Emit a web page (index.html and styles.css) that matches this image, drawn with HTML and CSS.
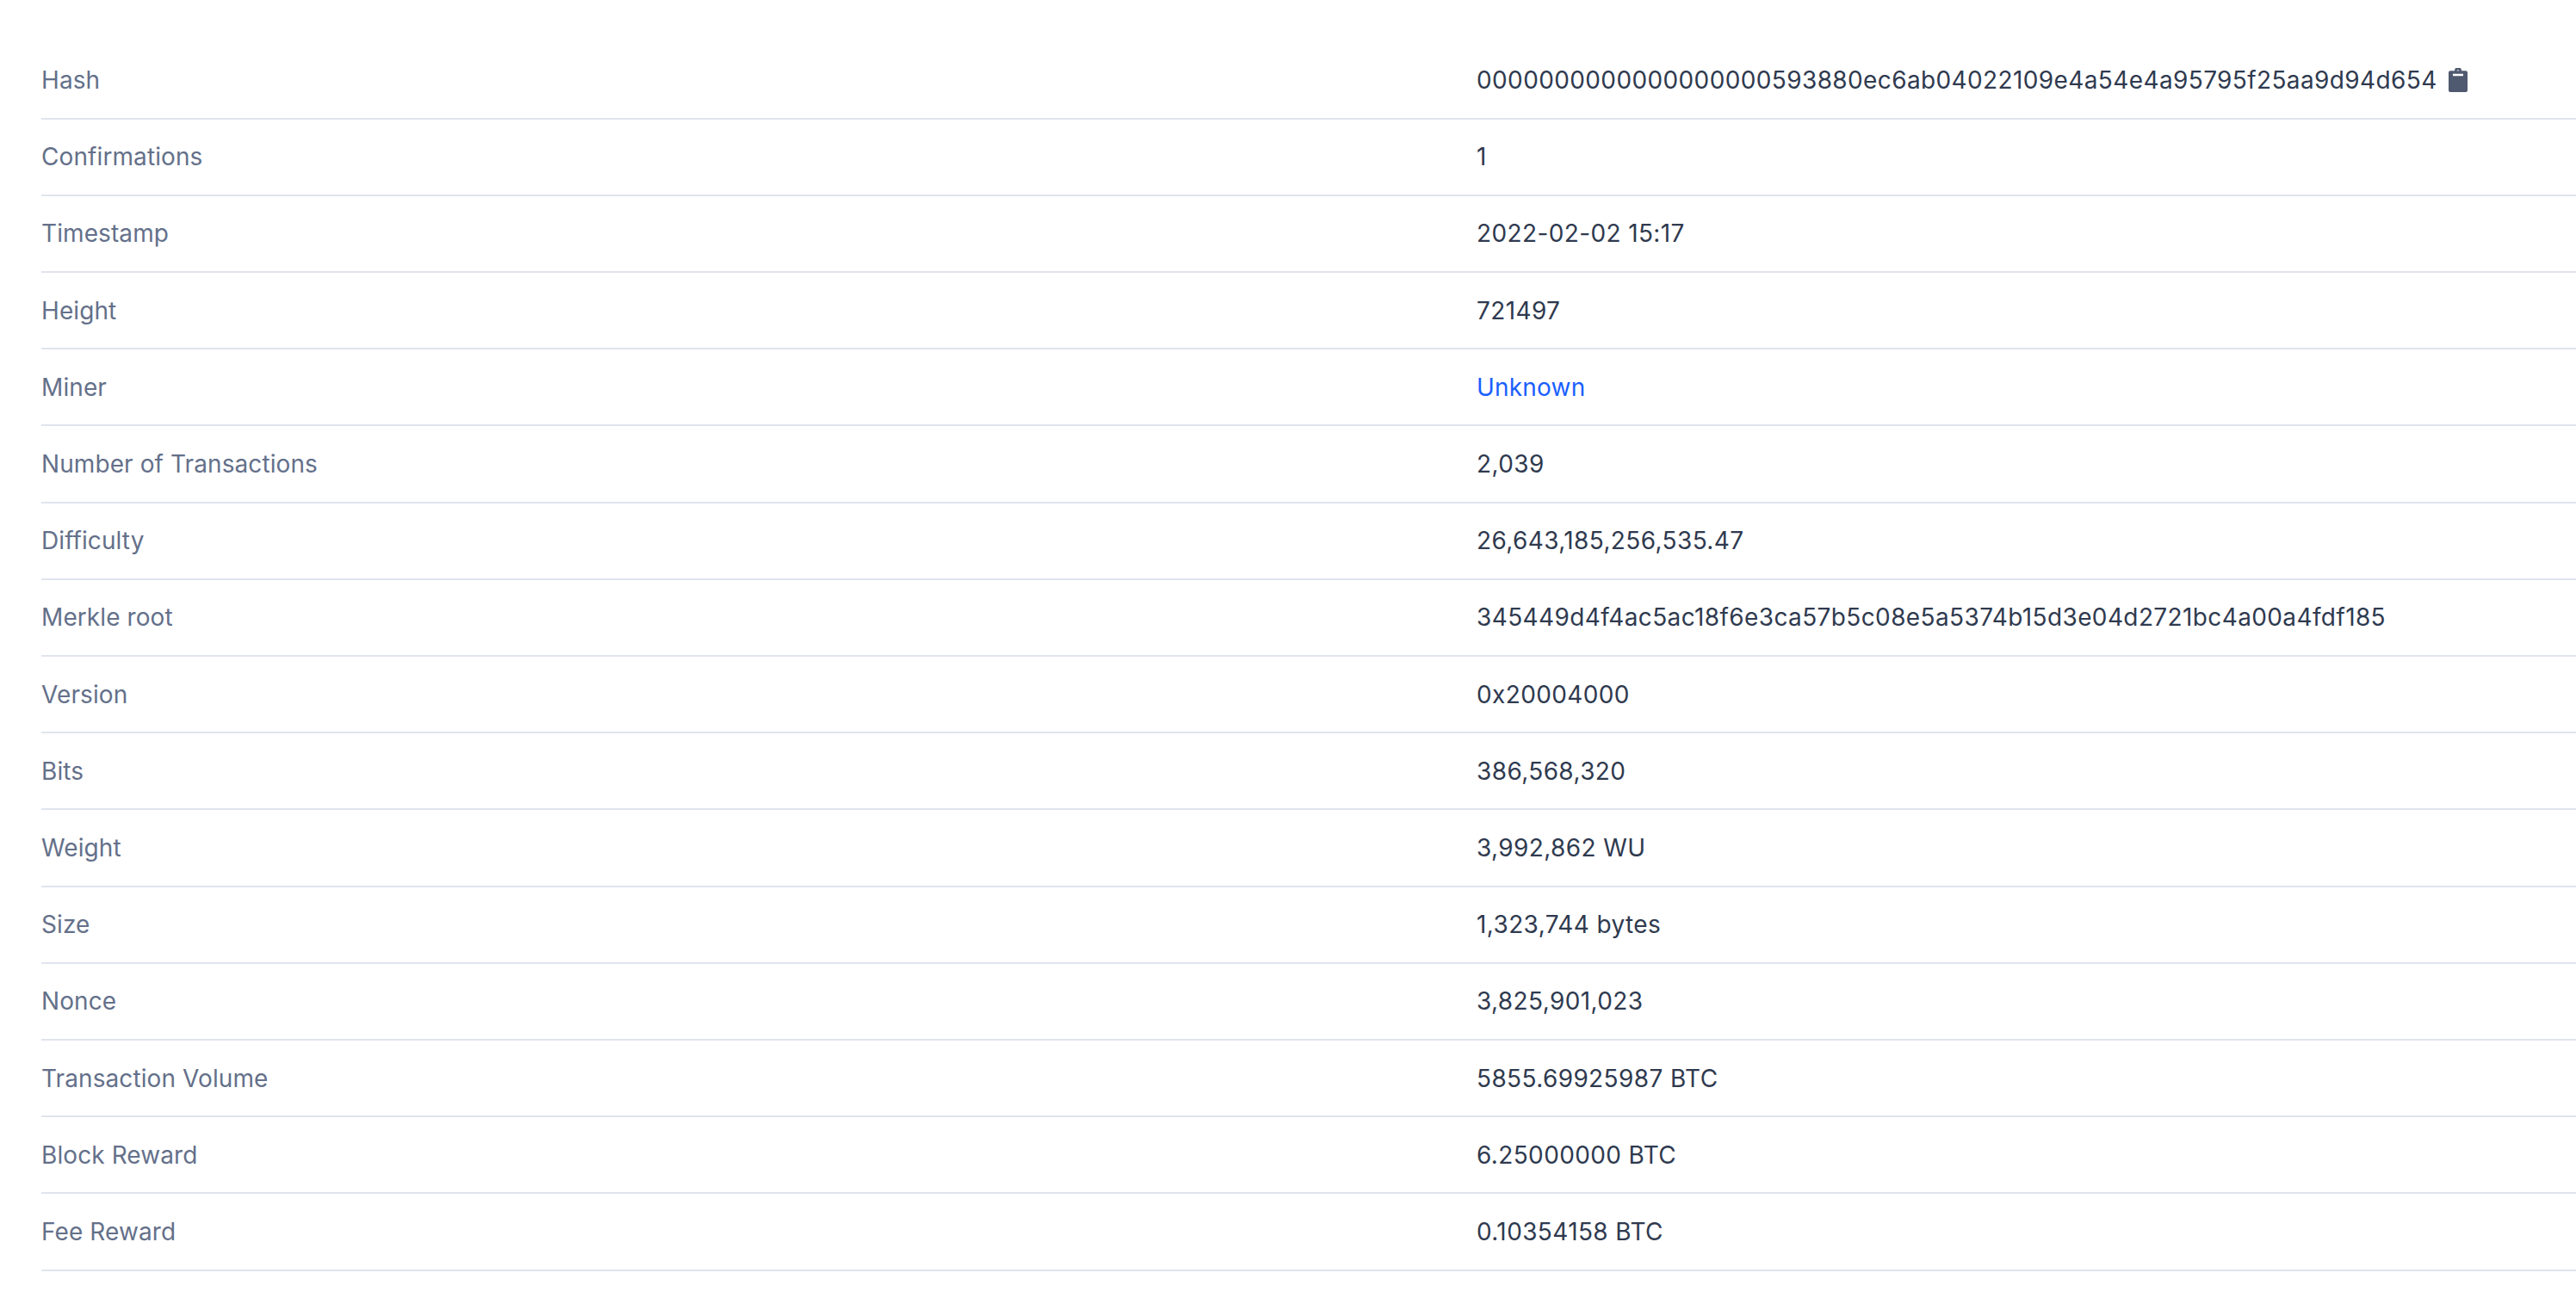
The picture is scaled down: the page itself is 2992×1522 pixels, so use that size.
FILE: index.html
```html
<!DOCTYPE html>
<html lang="en">
<head>
<meta charset="utf-8">
<title>Block details</title>
<link rel="stylesheet" href="styles.css">
</head>
<body>
<dl class="details">
  <div class="row"><dt>Hash</dt><dd class="hash">0000000000000000000593880ec6ab04022109e4a54e4a95795f25aa9d94d654<svg class="copy" viewBox="0 0 22 28" aria-hidden="true"><path fill-rule="evenodd" d="M7 3.200a4 4 0 0 1 8 0h5a2 2 0 0 1 2 2V26a2 2 0 0 1-2 2H2a2 2 0 0 1-2-2V5.200a2 2 0 0 1 2-2zM9.500 3.200h3a1.600 1.600 0 0 0-3 0zM5 6.700v2.600h12V6.700z"/></svg></dd></div>
  <div class="row"><dt>Confirmations</dt><dd>1</dd></div>
  <div class="row"><dt>Timestamp</dt><dd>2022-02-02 15:17</dd></div>
  <div class="row"><dt>Height</dt><dd>721497</dd></div>
  <div class="row"><dt>Miner</dt><dd><a class="link" href="#">Unknown</a></dd></div>
  <div class="row"><dt>Number of Transactions</dt><dd>2,039</dd></div>
  <div class="row"><dt>Difficulty</dt><dd>26,643,185,256,535.47</dd></div>
  <div class="row"><dt>Merkle root</dt><dd>345449d4f4ac5ac18f6e3ca57b5c08e5a5374b15d3e04d2721bc4a00a4fdf185</dd></div>
  <div class="row"><dt>Version</dt><dd>0x20004000</dd></div>
  <div class="row"><dt>Bits</dt><dd>386,568,320</dd></div>
  <div class="row"><dt>Weight</dt><dd>3,992,862 WU</dd></div>
  <div class="row"><dt>Size</dt><dd>1,323,744 bytes</dd></div>
  <div class="row"><dt>Nonce</dt><dd>3,825,901,023</dd></div>
  <div class="row"><dt>Transaction Volume</dt><dd>5855.69925987 BTC</dd></div>
  <div class="row"><dt>Block Reward</dt><dd>6.25000000 BTC</dd></div>
  <div class="row"><dt>Fee Reward</dt><dd>0.10354158 BTC</dd></div>
</dl>
</body>
</html>
```
FILE: styles.css
```css
html, body {
  margin: 0;
  background: #fff;
}
body {
  font-family: Inter, "Liberation Sans", sans-serif;
  font-size: 28px;
  overflow: hidden;
}
.details {
  margin: 49.500px 0 0 48px;
}
.row {
  display: grid;
  grid-template-columns: 1667px 1fr;
  align-items: center;
  height: 89.200px;
  box-sizing: border-box;
  border-bottom: 2px solid #e0e4ee;
}
dt {
  color: #64708a;
  letter-spacing: 0.09px;
}
dd {
  margin: 0;
  color: #2f3a4f;
  letter-spacing: 0.38px;
}
.hash {
  display: flex;
  align-items: center;
  gap: 13px;
}
.copy {
  width: 22px;
  height: 28px;
  fill: #4f5a70;
  flex: none;
}
.link {
  color: #1a5fff;
  letter-spacing: 0.2px;
  text-decoration: none;
}
```
